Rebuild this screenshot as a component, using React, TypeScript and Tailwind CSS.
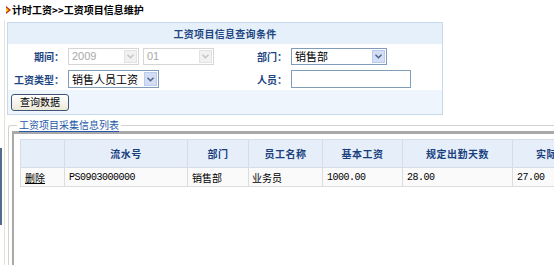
import React from "react";

function Chevron({ color }: { color: string }) {
  return (
    <svg width="7" height="5" viewBox="0 0 7 5">
      <polyline points="0.5,0.8 3.5,3.8 6.5,0.8" fill="none" stroke={color} strokeWidth="1.4" />
    </svg>
  );
}

function Select({
  className,
  text,
  disabled,
  mono,
}: {
  className: string;
  text: string;
  disabled?: boolean;
  mono?: boolean;
}) {
  return (
    <div
      className={`flex items-stretch border bg-white ${
        disabled ? "border-[#d6d6d6] text-[#a9a9a9]" : "border-[#7f9db9] text-black"
      } ${className}`}
    >
      <div
        className={`flex-1 flex items-center pl-[3px] leading-none ${
          mono ? "font-['Liberation_Sans',sans-serif] text-[11px]" : "text-[11px]"
        }`}
      >
        {text}
      </div>
      <div
        className={`w-[13px] m-px flex items-center justify-center ${
          disabled ? "bg-[#f1f1f1] border border-[#e2e2e2]" : "bg-[#d3def5] border border-[#b9cbef]"
        }`}
      >
        <Chevron color={disabled ? "#c4c4c4" : "#4d6185"} />
      </div>
    </div>
  );
}

export default function App() {
  const cols = [
    { w: "w-[44px]", h: "" },
    { w: "w-[123px]", h: "流水号" },
    { w: "w-[61px]", h: "部门" },
    { w: "w-[74px]", h: "员工名称" },
    { w: "w-[80px]", h: "基本工资" },
    { w: "w-[110px]", h: "规定出勤天数" },
    { w: "w-[110px]", h: "实际出勤天数" },
  ];
  return (
    <div className="w-[554px] h-[265px] overflow-hidden bg-white flex font-['Noto_Sans_CJK_SC','Noto_Sans',sans-serif] text-[10px] text-black">
      <div className="w-[2px] shrink-0">
        <div className="mt-[148px] h-[77px] bg-[#4f6d8c]" />
      </div>
      <div className="w-[2px] shrink-0" />
      <div className="w-px shrink-0 mt-[20px] bg-[#e6e2d6]" />
      <div className="flex-1 min-w-0">
        {/* title */}
        <div className="h-[20px] flex items-center pl-px gap-[1px]">
          <svg width="5" height="8" viewBox="0 0 5 8">
            <polygon points="0,0 5,4 0,8" fill="#b8260a" />
            <polygon points="0,1.6 3,4 0,6.4" fill="#ffc21a" />
          </svg>
          <span className="font-bold text-[10px] leading-none">计时工资&gt;&gt;工资项目信息维护</span>
        </div>

        {/* query panel */}
        <div className="ml-[2px] mt-[2px] w-[436px] border border-[#c6d8ea]">
          <div className="h-[21px] bg-[#e6f0fa] flex items-center justify-center font-bold text-[#1e4682] tracking-[0.3px]">
            工资项目信息查询条件
          </div>
          <div className="h-[24px] bg-white flex items-center">
            <div className="w-[56px] text-right font-bold text-[#1e4682]">期间：</div>
            <div className="w-[172px] ml-[4px] flex items-center gap-[4px]">
              <Select className="w-[71px] h-[17px]" text="2009" disabled mono />
              <Select className="w-[71px] h-[17px]" text="01" disabled mono />
            </div>
            <div className="w-[47px] text-right font-bold text-[#1e4682]">部门：</div>
            <div className="ml-[4px]">
              <Select className="w-[96px] h-[17px]" text="销售部" />
            </div>
          </div>
          <div className="h-[22px] bg-white flex items-center">
            <div className="w-[56px] text-right font-bold text-[#1e4682]">工资类型：</div>
            <div className="w-[172px] ml-[4px] flex items-center">
              <Select className="w-[91px] h-[18px]" text="销售人员工资" />
            </div>
            <div className="w-[47px] text-right font-bold text-[#1e4682]">人员：</div>
            <div className="ml-[4px]">
              <div className="w-[120px] h-[18px] border border-[#7f9db9] bg-white" />
            </div>
          </div>
          <div className="h-[24px] bg-[#eef5fc] flex items-center">
            <button className="ml-[3px] w-[58px] h-[17px] rounded-[3px] border border-[#3d5678] bg-gradient-to-b from-[#ffffff] to-[#ece9d8] text-[10px] text-black leading-none flex items-center justify-center">
              查询数据
            </button>
          </div>
        </div>

        {/* list fieldset */}
        <fieldset className="mt-[4px] ml-[3px] w-[600px] h-[160px] border-l border-t border-[#d2d2d2] rounded-tl-[3px] pl-[3px]">
          <legend className="ml-[5px] px-[2px] leading-[12px] text-[#2457a8] underline underline-offset-[2px]">
            工资项目采集信息列表
          </legend>
          <div className="h-full border-t-[3px] border-l-[2px] border-t-[#a9a9a9] border-l-[#a9a9a9] pt-[5px] pl-[6px]">
            <table className="table-fixed border-collapse w-[602px] border-b border-b-[#b8b8b8]">
              <thead>
                <tr>
                  {cols.map((c, i) => (
                    <th
                      key={i}
                      className={`${c.w} h-[28px] border border-[#d6dde6] bg-[#e6eff9] font-bold text-[#1a3f7e] text-center tracking-[0.5px]`}
                    >
                      {c.h}
                    </th>
                  ))}
                </tr>
              </thead>
              <tbody>
                <tr className="h-[19px] bg-[#fafafa]">
                  <td className="border border-[#dcdcdc] px-[4px]">
                    <span className="underline">删除</span>
                  </td>
                  <td className="border border-[#dcdcdc] px-[4px] font-['Liberation_Mono',monospace] text-[10px] tracking-[-0.5px]">
                    PS0903000000
                  </td>
                  <td className="border border-[#dcdcdc] px-[4px]">销售部</td>
                  <td className="border border-[#dcdcdc] px-[3px]">业务员</td>
                  <td className="border border-[#dcdcdc] px-[4px] font-['Liberation_Mono',monospace] text-[10px] tracking-[-0.5px]">
                    1000.00
                  </td>
                  <td className="border border-[#dcdcdc] px-[4px] font-['Liberation_Mono',monospace] text-[10px] tracking-[-0.5px]">
                    28.00
                  </td>
                  <td className="border border-[#dcdcdc] px-[4px] font-['Liberation_Mono',monospace] text-[10px] tracking-[-0.5px]">
                    27.00
                  </td>
                </tr>
              </tbody>
            </table>
          </div>
        </fieldset>
      </div>
    </div>
  );
}
